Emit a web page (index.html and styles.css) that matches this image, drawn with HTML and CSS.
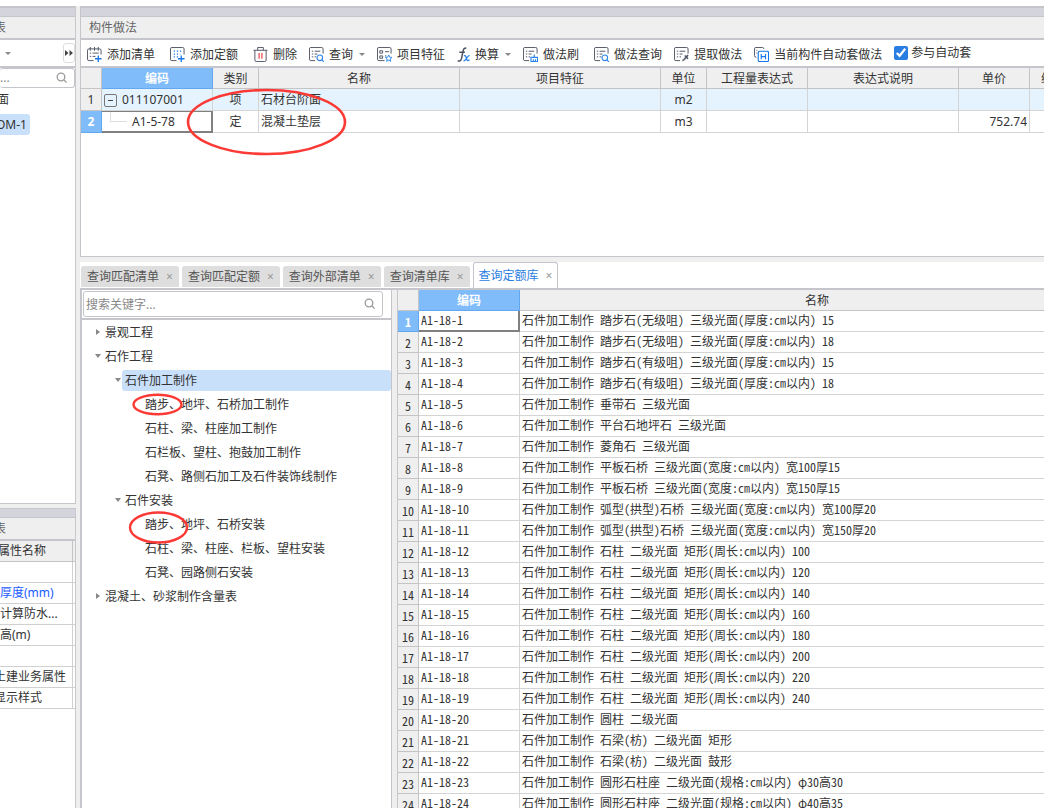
FILE: index.html
```html
<!DOCTYPE html>
<html lang="zh-CN">
<head>
<meta charset="utf-8">
<title>构件做法</title>
<link rel="stylesheet" href="styles.css">
</head>
<body>
<svg class="symbols" aria-hidden="true">
  <symbol id="search" viewBox="0 0 12 12"><circle cx="5" cy="5" r="3.8" fill="none" stroke="#999" stroke-width="1.3"/><path d="M8 8l2.6 2.6" stroke="#999" stroke-width="1.3"/></symbol>
  <symbol id="sheet" viewBox="0 0 16 16"><path d="M6.500 14.500H2a1.500 1.500 0 0 1-1.500-1.500V2A1.500 1.500 0 0 1 2 .5H13.500A1.500 1.500 0 0 1 15 2V7" fill="none" stroke="#4d5260"/><path d="M3 4.500H4.500M6 4.500H12M3 7.500H4.500M6 7.500H9M3 10.500H4.500M6 10.500H7.500" stroke="#4d5260"/></symbol>
</svg>
<div class="app">
  <aside class="sidebar">
    <section class="panel components">
      <div class="band"></div>
      <h2 class="panel-title clip-six">表</h2>
      <div class="side-tools">
        <button class="drop" aria-label="新建"><i class="caret"></i></button>
        <button class="more" aria-label="更多"><svg width="8" height="6" viewBox="0 0 8 6"><path d="M0 0l3.500 3L0 6zM4.500 0L8 3 4.500 6z" fill="#444"/></svg></button>
      </div>
      <label class="search side-search"><input type="text" placeholder="..." aria-label="搜索构件"><svg width="12" height="12"><use href="#search"/></svg></label>
      <ul class="component-list"><li class="clip-three">面</li><li><span class="chosen">OM-1</span></li></ul>
    </section>
    <section class="panel properties">
      <div class="band"></div>
      <h2 class="panel-title clip-six">表</h2>
      <table class="props">
        <thead><tr><th class="clip-two">属性名称</th><th class="edge"></th></tr></thead>
        <tbody>
          <tr><td></td><td></td></tr>
          <tr><td class="link">厚度(mm)</td><td></td></tr>
          <tr><td>计算防水...</td><td></td></tr>
          <tr><td>高(m)</td><td></td></tr>
          <tr><td></td><td></td></tr>
          <tr><td class="clip-six">土建业务属性</td><td></td></tr>
          <tr><td class="clip-six">显示样式</td><td></td></tr>
        </tbody>
      </table>
    </section>
  </aside>
  <main class="main">
    <section class="practice">
      <div class="band"></div>
      <h2 class="panel-title">构件做法</h2>
      <div class="toolbar">
        <button class="tool wide"><svg viewBox="0 0 16 16"><path d="M7 14.500H2A1.500 1.500 0 0 1 .5 13V3.500A1.500 1.500 0 0 1 2 2h11.500A1.500 1.500 0 0 1 15 3.500V8M3.500 0v4M8 0v4M12 0v4" fill="none" stroke="#4d5260"/><path d="M3 6.500H4.500M6 6.500H12.500M3 10H4.500M6 10H9" stroke="#4d5260"/><path d="M12 9v7M8.500 12.500h7" stroke="#1876e8" stroke-width="1.400"/></svg>添加清单</button>
        <button class="tool wide"><svg viewBox="0 0 16 16"><path d="M7 14.500H2A1.500 1.500 0 0 1 .5 13V2A1.500 1.500 0 0 1 2 .5h11.500A1.500 1.500 0 0 1 15 2V8" fill="none" stroke="#4d5260"/><path d="M4 4.500h9M4 7.500h7M4 10.500h5" stroke="#1876e8" stroke-width="1.300" stroke-dasharray="1.300 2"/><path d="M12 9v7M8.500 12.500h7" stroke="#1876e8" stroke-width="1.400"/></svg>添加定额</button>
        <button class="tool"><svg viewBox="0 0 16 16"><path d="M.5 3.500h15M5 3.500V.5h6v3M2 3.500V14A1.500 1.500 0 0 0 3.500 15.500h9A1.500 1.500 0 0 0 14 14V3.500" fill="none" stroke="#4d5260"/><path d="M6.500 6.500v6M9.500 6.500v6" stroke="#e53935" stroke-width="1.200"/></svg>删除</button>
        <button class="tool"><svg viewBox="0 0 16 16"><use href="#sheet"/><circle cx="11.500" cy="11.500" r="3" fill="#fff" stroke="#2b83ea" stroke-width="1.200"/><path d="M13.700 13.700L16 16" stroke="#2b83ea" stroke-width="1.200"/></svg>查询<i class="caret"></i></button>
        <button class="tool"><svg viewBox="0 0 16 16"><path d="M8 14.500H2A1.500 1.500 0 0 1 .5 13V2A1.500 1.500 0 0 1 2 .5h11.500A1.500 1.500 0 0 1 15 2V7M3 4h3v2.500H3zM3 9.500h3V12H3zM8.500 5H13M8.500 9.500H10" fill="none" stroke="#4d5260"/><path d="M12.500 8.500l1 2.300 2.400.3-1.800 1.600.5 2.600-2.100-1.300-2.200 1.300.5-2.600L9 11.100l2.400-.3z" fill="#fff" stroke="#2b83ea"/></svg>项目特征</button>
        <button class="tool"><svg class="narrow" viewBox="0 0 14 16"><path d="M10 1.500C7.500 0 6.800 3 6.200 6L4.800 12.500C4.200 15 2.500 15.500.8 14.500M2.500 5.500h6" fill="none" stroke="#4d5260" stroke-width="1.600"/><path d="M7.500 9.500c2-1 2.300 1.200 2.800 3.200s1.400 2.500 3.200 1M13.500 9c-2.300 0-3.800 6-6.500 6" fill="none" stroke="#2b83ea" stroke-width="1.400"/></svg>换算<i class="caret"></i></button>
        <button class="tool wide"><svg viewBox="0 0 16 16"><use href="#sheet"/><path d="M12 8v3M8.500 11h7v4.500h-7zM11 13v2.500M13.300 13v2.500" fill="#fff" stroke="#2b83ea" stroke-width="1.200"/></svg>做法刷</button>
        <button class="tool"><svg viewBox="0 0 16 16"><use href="#sheet"/><circle cx="11.500" cy="11.500" r="3" fill="#fff" stroke="#2b83ea" stroke-width="1.200"/><path d="M13.700 13.700L16 16" stroke="#2b83ea" stroke-width="1.200"/></svg>做法查询</button>
        <button class="tool"><svg viewBox="0 0 16 16"><use href="#sheet"/><path d="M8.500 15.500l1-2.500 3-3 1.500 1.500-3 3z" fill="#687080"/><path d="M11.500 9l3.500 3.500M13 11l2-2.500" stroke="#4d5260" stroke-width="1.600"/></svg>提取做法</button>
        <button class="tool"><svg viewBox="0 0 16 16"><path d="M2.500 11A2 2 0 0 1 .5 9V2A1.500 1.500 0 0 1 2 .5H9A1.500 1.500 0 0 1 10.500 2M2.500 3.500h1M2.500 6.500h1" fill="none" stroke="#4d5260"/><rect x="4.500" y="4.500" width="11" height="11" rx="1.500" fill="#fff" stroke="#1876e8" stroke-width="1.200"/><path d="M7.700 7.500V13M12.300 7.500V13M7.700 10.300h4.600" stroke="#1876e8" stroke-width="1.200"/></svg>当前构件自动套做法</button>
        <label class="auto"><input type="checkbox" checked>参与自动套</label>
      </div>
      <div class="practice-grid">
        <table class="grid practice-table">
          <colgroup><col class="w-num"><col class="w-code"><col class="w-small"><col class="w-wide"><col class="w-wide"><col class="w-small"><col class="w-expr"><col class="w-note"><col class="w-price"><col class="w-price"></colgroup>
          <thead><tr><th></th><th class="active">编码</th><th>类别</th><th>名称</th><th>项目特征</th><th>单位</th><th>工程量表达式</th><th>表达式说明</th><th>单价</th><th>综合单价</th></tr></thead>
          <tbody>
            <tr class="tinted"><th>1</th><td class="parent"><button class="fold" aria-label="折叠"></button>011107001</td><td class="mid">项</td><td>石材台阶面</td><td></td><td class="mid">m2</td><td></td><td></td><td></td><td></td></tr>
            <tr><th class="active">2</th><td class="child focus"><i class="branch"></i>A1-5-78</td><td class="mid">定</td><td>混凝土垫层</td><td></td><td class="mid">m3</td><td></td><td></td><td class="num">752.74</td><td></td></tr>
          </tbody>
        </table>
      </div>
    </section>
    <nav class="tabs">
      <button class="tab">查询匹配清单<span class="x">×</span></button>
      <button class="tab">查询匹配定额<span class="x">×</span></button>
      <button class="tab">查询外部清单<span class="x">×</span></button>
      <button class="tab">查询清单库<span class="x">×</span></button>
      <button class="tab current">查询定额库<span class="x">×</span></button>
    </nav>
    <div class="library">
      <section class="chapters">
        <div class="search-row"><label class="search"><input type="text" placeholder="搜索关键字..." aria-label="搜索关键字"><svg width="12" height="12"><use href="#search"/></svg></label></div>
        <ul class="tree">
          <li class="l1"><i class="arrow"></i><span>景观工程</span></li>
          <li class="l1"><i class="arrow open"></i><span>石作工程</span></li>
          <li class="l2"><i class="arrow open"></i><span class="picked">石件加工制作</span></li>
          <li class="l3"><span>踏步、地坪、石桥加工制作</span></li>
          <li class="l3"><span>石柱、梁、柱座加工制作</span></li>
          <li class="l3"><span>石栏板、望柱、抱鼓加工制作</span></li>
          <li class="l3"><span>石凳、路侧石加工及石件装饰线制作</span></li>
          <li class="l2"><i class="arrow open"></i><span>石件安装</span></li>
          <li class="l3"><span>踏步、地坪、石桥安装</span></li>
          <li class="l3"><span>石柱、梁、柱座、栏板、望柱安装</span></li>
          <li class="l3"><span>石凳、园路侧石安装</span></li>
          <li class="l1"><i class="arrow"></i><span>混凝土、砂浆制作含量表</span></li>
        </ul>
      </section>
      <section class="quotas">
        <table class="grid quota-table">
          <colgroup><col class="w-num"><col class="w-quota"><col class="w-title"></colgroup>
          <thead><tr><th></th><th class="active">编码</th><th>名称</th></tr></thead>
          <tbody>
            <tr><th class="active">1</th><td class="focus">A1-18-1</td><td>石件加工制作 踏步石(无级咀) 三级光面(厚度:㎝以内) 15</td></tr>
            <tr><th>2</th><td>A1-18-2</td><td>石件加工制作 踏步石(无级咀) 三级光面(厚度:㎝以内) 18</td></tr>
            <tr><th>3</th><td>A1-18-3</td><td>石件加工制作 踏步石(有级咀) 三级光面(厚度:㎝以内) 15</td></tr>
            <tr><th>4</th><td>A1-18-4</td><td>石件加工制作 踏步石(有级咀) 三级光面(厚度:㎝以内) 18</td></tr>
            <tr><th>5</th><td>A1-18-5</td><td>石件加工制作 垂带石 三级光面</td></tr>
            <tr><th>6</th><td>A1-18-6</td><td>石件加工制作 平台石地坪石 三级光面</td></tr>
            <tr><th>7</th><td>A1-18-7</td><td>石件加工制作 菱角石 三级光面</td></tr>
            <tr><th>8</th><td>A1-18-8</td><td>石件加工制作 平板石桥 三级光面(宽度:㎝以内) 宽100厚15</td></tr>
            <tr><th>9</th><td>A1-18-9</td><td>石件加工制作 平板石桥 三级光面(宽度:㎝以内) 宽150厚15</td></tr>
            <tr><th>10</th><td>A1-18-10</td><td>石件加工制作 弧型(拱型)石桥 三级光面(宽度:㎝以内) 宽100厚20</td></tr>
            <tr><th>11</th><td>A1-18-11</td><td>石件加工制作 弧型(拱型)石桥 三级光面(宽度:㎝以内) 宽150厚20</td></tr>
            <tr><th>12</th><td>A1-18-12</td><td>石件加工制作 石柱 二级光面 矩形(周长:㎝以内) 100</td></tr>
            <tr><th>13</th><td>A1-18-13</td><td>石件加工制作 石柱 二级光面 矩形(周长:㎝以内) 120</td></tr>
            <tr><th>14</th><td>A1-18-14</td><td>石件加工制作 石柱 二级光面 矩形(周长:㎝以内) 140</td></tr>
            <tr><th>15</th><td>A1-18-15</td><td>石件加工制作 石柱 二级光面 矩形(周长:㎝以内) 160</td></tr>
            <tr><th>16</th><td>A1-18-16</td><td>石件加工制作 石柱 二级光面 矩形(周长:㎝以内) 180</td></tr>
            <tr><th>17</th><td>A1-18-17</td><td>石件加工制作 石柱 二级光面 矩形(周长:㎝以内) 200</td></tr>
            <tr><th>18</th><td>A1-18-18</td><td>石件加工制作 石柱 二级光面 矩形(周长:㎝以内) 220</td></tr>
            <tr><th>19</th><td>A1-18-19</td><td>石件加工制作 石柱 二级光面 矩形(周长:㎝以内) 240</td></tr>
            <tr><th>20</th><td>A1-18-20</td><td>石件加工制作 圆柱 二级光面</td></tr>
            <tr><th>21</th><td>A1-18-21</td><td>石件加工制作 石梁(枋) 二级光面 矩形</td></tr>
            <tr><th>22</th><td>A1-18-22</td><td>石件加工制作 石梁(枋) 二级光面 鼓形</td></tr>
            <tr><th>23</th><td>A1-18-23</td><td>石件加工制作 圆形石柱座 二级光面(规格:㎝以内) φ30高30</td></tr>
            <tr><th>24</th><td>A1-18-24</td><td>石件加工制作 圆形石柱座 二级光面(规格:㎝以内) φ40高35</td></tr>
          </tbody>
        </table>
      </section>
    </div>
  </main>
</div>
<svg class="marks" width="400" height="600" viewBox="0 0 400 600" aria-hidden="true">
  <g fill="none" stroke="#fb3935">
    <ellipse cx="266.500" cy="122" rx="78.500" ry="32" stroke-width="2.600"/>
    <ellipse cx="157.500" cy="404.500" rx="24" ry="9.800" stroke-width="2.400"/>
    <ellipse cx="158.500" cy="527.500" rx="28.500" ry="15" stroke-width="2.400"/>
  </g>
</svg>
</body>
</html>
```
FILE: styles.css
```css
* { box-sizing: border-box; }
body {
  margin: 0;
  height: 100vh;
  overflow: hidden;
  position: relative;
  background: #fff;
  color: #333;
  font: 12px/20px "Noto Sans", "Noto Sans CJK SC", sans-serif;
}
h2, ul { margin: 0; padding: 0; }
li { list-style: none; }
button, input { font: inherit; color: inherit; }
button { border: 0; padding: 0; background: none; white-space: nowrap; }
.symbols { position: absolute; width: 0; height: 0; }
.marks { position: absolute; left: 0; top: 0; pointer-events: none; }

.app { display: flex; height: 100%; padding-top: 6px; }
.sidebar {
  flex: none;
  width: 80px;
  padding-right: 4px;
  background: #efefef;
  display: flex;
  flex-direction: column;
  gap: 4px;
}
.main { flex: 1; min-width: 0; display: flex; flex-direction: column; background: #efefef; }

.band { height: 11px; background: #d4d5dc; border-top: 2px solid #c4c6cc; border-bottom: 1px solid #c4c6cc; }
.panel-title {
  height: 23px;
  padding-left: 8px;
  background: #efefef;
  border-bottom: 2px solid #c4c6cc;
  color: #666;
  font-size: 12px;
  font-weight: 400;
  line-height: 22px;
}
.panel { background: #fff; border-right: 1px solid #c8c8cc; overflow: hidden; }
.panel .panel-title { padding-left: 0; }
.components { flex: none; height: 498px; border-bottom: 1px solid #c4c6cc; }
.properties { flex: 1; }
.properties .band { height: 10px; border-top-width: 1px; }
.clip-two { text-indent: -2px; }
.clip-three { text-indent: -3px; }
.clip-six { text-indent: -6px; }

.side-tools {
  display: flex;
  align-items: center;
  justify-content: space-between;
  height: 28px;
  padding-left: 5px;
  border-bottom: 2px solid #c4c6cc;
}
.drop { display: flex; }
.more { width: 12px; height: 20px; border: 1px solid #ddd; border-radius: 3px; display: flex; align-items: center; justify-content: center; }
.caret { width: 0; height: 0; border: 3px solid transparent; border-top-color: #888; border-bottom: 0; }

.search { display: flex; align-items: center; background: #fff; border: 1px solid #c4c6cc; border-radius: 3px; }
.search input { flex: 1; min-width: 0; padding: 2px 2px 0; border: 0; outline: 0; background: none; }
.search input::placeholder { color: #888; opacity: 1; }
.search svg { flex: none; margin-right: 6px; }
.side-search { height: 20px; border-left: 0; }
.side-search input { padding: 0; }
.component-list li { height: 24px; line-height: 24px; }
.chosen { display: block; width: 30px; height: 21px; margin-top: 2px; line-height: 21px; border-radius: 0 3px 3px 0; background: #c9e0fa; text-indent: -4px; }

.props { width: 100%; table-layout: fixed; border-spacing: 0; }
.props th, .props td {
  height: 21px;
  padding: 0;
  border-right: 1px solid #d0d0d0;
  border-bottom: 1px solid #d0d0d0;
  line-height: 20px;
  font-weight: 400;
  text-align: left;
  white-space: nowrap;
}
.props th { background: #efefef; border-color: #c4c4c4; }
.props .edge { width: 2px; }
.props td:last-child, .props th:last-child { border-right: 0; }
.props .link { color: #1a5cff; }

.practice { flex: none; border-left: 1px solid #c4c6cc; border-bottom: 1px solid #c4c6cc; background: #fff; }
.toolbar { display: flex; align-items: center; gap: 12px; height: 28px; padding: 3px 0 0 6px; border-bottom: 2px solid #c4c6cc; overflow: hidden; }
.tool { flex: none; display: flex; align-items: center; gap: 5px; }
.tool svg { width: 15px; height: 15px; }
.tool .narrow { width: 13px; }
.tool.wide { margin-right: 3px; }
.tool .caret { margin-left: 1px; }
.auto { flex: none; display: flex; align-items: center; gap: 3px; padding-bottom: 4px; }
.auto input { width: 14px; height: 14px; margin: 0; accent-color: #2a7de1; }

.practice-grid { height: 188px; overflow: hidden; }
.grid { table-layout: fixed; border-spacing: 0; }
.grid th, .grid td {
  height: 22px;
  padding: 0 2px;
  border-right: 1px solid #d4d4d4;
  border-bottom: 1px solid #d4d4d4;
  white-space: nowrap;
  line-height: 20px;
}
.grid th { padding: 0; background: #efefef; border-color: #c4c4c4; font-weight: 400; text-align: center; }
.grid thead th { height: 21px; padding-top: 2px; line-height: 18px; }
.grid .active { background: #80bbfa; border-color: #62a7f0; color: #fff; font-weight: 700; }
.tinted td { background: #e5f3ff; }
.grid .mid { text-align: center; }
.grid .num { text-align: right; }
.grid .focus { border-right: 2px solid #808080; border-bottom: 2px solid #808080; }
.practice-table { width: 1020px; }
.practice-table .focus { border-top: 1px solid #808080; line-height: 19px; }
.w-num { width: 21px; }
.w-code { width: 111px; }
.w-small { width: 46px; }
.w-wide { width: 201px; }
.w-expr { width: 101px; }
.w-note { width: 151px; }
.w-price { width: 71px; }
.fold { display: inline-flex; align-items: center; justify-content: center; width: 13px; height: 13px; margin: 0 5px 0 0; border: 1px solid #777; border-radius: 2px; vertical-align: middle; }
.fold::before { content: ""; width: 5px; height: 1px; background: #444; }
.branch { display: inline-block; width: 17px; height: 10px; margin: 0 5px 0 6px; border-left: 1px solid #ddd; border-bottom: 1px solid #ddd; vertical-align: 4px; }

.tabs { display: flex; align-items: flex-end; gap: 3px; height: 28px; margin-top: 5px; padding-left: 1px; background: #fff; border-bottom: 2px solid #c4c6cc; }
.tab { display: flex; align-items: center; gap: 7px; height: 21px; margin-bottom: 1px; padding: 0 6px; border-radius: 3px 3px 0 0; background: #dedede; color: #555; }
.tab .x { color: #999; font-size: 12px; }
.tab.current { height: 26px; margin-bottom: 0; padding: 0 5px; border: 1px solid #c4c6cc; border-bottom: 0; background: #fff; color: #2a7de1; }

.library { flex: 1; min-height: 0; display: flex; gap: 5px; }
.chapters { flex: none; width: 312px; background: #fff; border-left: 2px solid #c4c6cc; border-right: 1px solid #c4c6cc; }
.search-row { height: 30px; padding: 1px 8px 0 1px; border-bottom: 2px solid #c4c6cc; }
.search-row .search { height: 26px; }
.tree li { display: flex; align-items: center; height: 24px; }
.tree span { flex: 1; height: 21px; padding-left: 3px; line-height: 21px; }
.tree .picked { background: #c9e0fa; border-radius: 3px; }
.l1 { padding-left: 12px; }
.l2 { padding-left: 32px; }
.l3 { padding-left: 60px; }
.arrow { display: flex; justify-content: center; width: 8px; }
.arrow::before { content: ""; border: 3px solid transparent; border-left: 4px solid #888; border-right: 0; }
.arrow.open::before { border: 3px solid transparent; border-top: 4px solid #888; border-bottom: 0; }

.quotas { flex: 1; min-width: 0; overflow: hidden; background: #fff; border-left: 1px solid #c4c6cc; }
.quota-table { width: 717px; }
.w-quota { width: 101px; }
.w-title { width: 595px; }
.quota-table tbody th, .quota-table tbody td {
  height: 21px;
  font-family: "Noto Sans CJK SC", sans-serif;
  font-feature-settings: "hwid";
  line-height: 18px;
}
.quota-table tbody td { padding-bottom: 2px; }
.quota-table tbody .focus { padding-bottom: 1px; }
.quota-table tbody th { padding-top: 2px; }
```
